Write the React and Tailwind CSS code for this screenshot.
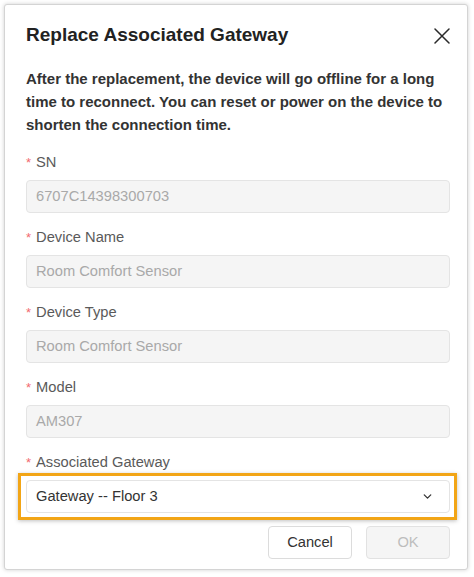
import { ChevronDown } from "lucide-react";

const fields = [
  { label: "SN", value: "6707C14398300703" },
  { label: "Device Name", value: "Room Comfort Sensor" },
  { label: "Device Type", value: "Room Comfort Sensor" },
  { label: "Model", value: "AM307" },
];

function Label({ children }) {
  return (
    <div className="flex items-center h-[22px] text-[14.7px] text-[#5a5a5a]">
      <span className="text-[#f26a6f] text-[13px] mr-[5px] mt-[2px]">*</span>
      {children}
    </div>
  );
}

export default function App() {
  return (
    <div
      className="min-h-screen bg-white pt-[4px] pl-[4px]"
      style={{ fontFamily: '"Liberation Sans", Arial, sans-serif' }}
    >
      <div className="w-[464px] h-[566px] bg-white border border-[#d4d4d4] rounded-[3px] shadow-[0_0_4px_rgba(0,0,0,0.18)] pt-[18px] pl-[21px] pr-[17px] pb-[10px] flex flex-col">
        {/* header */}
        <div className="flex items-center justify-between h-[24px]">
          <h1 className="text-[19px] font-bold leading-[24px] text-[#222]">
            Replace Associated Gateway
          </h1>
          <svg width="16" height="16" viewBox="0 0 16 16" className="mr-[0px] mt-[1px]">
            <path d="M1 1 L15 15 M15 1 L1 15" stroke="#2a2a2a" strokeWidth="1.5" strokeLinecap="round" fill="none" />
          </svg>
        </div>

        <p className="mt-[19.5px] text-[15px] font-bold leading-[23px] text-[#333]">
          After the replacement, the device will go offline for a long time to
          reconnect. You can reset or power on the device to shorten the
          connection time.
        </p>

        <div className="mt-[15.5px] flex flex-col">
          {fields.map((f) => (
            <div key={f.label} className="mb-[13px]">
              <Label>{f.label}</Label>
              <div className="mt-[7px] h-[33px] rounded-[4px] border border-[#e4e4e4] bg-[#f5f5f5] flex items-center px-[9px] text-[14.7px] text-[#a9a9a9]">
                {f.value}
              </div>
            </div>
          ))}

          <div>
            <Label>Associated Gateway</Label>
            <div className="relative mt-[7px]">
              <div className="absolute -left-[8px] -right-[7px] -top-[7px] -bottom-[7px] border-[3px] border-[#f2a516] shadow-[0_1px_4px_rgba(0,0,0,0.25)] pointer-events-none" />
              <div className="h-[33px] rounded-[4px] border border-[#e4e4e4] bg-white flex items-center justify-between px-[9px] text-[14.7px] text-[#333]">
                <span>Gateway -- Floor 3</span>
                <ChevronDown size={13} strokeWidth={2.4} className="text-[#333] mr-[6px]" />
              </div>
            </div>
          </div>
        </div>

        <div className="mt-[13px] flex justify-end gap-[14px]">
          <button className="w-[84px] h-[33px] rounded-[4px] border border-[#dcdcdc] bg-white text-[14.7px] text-[#333]">
            Cancel
          </button>
          <button className="w-[84px] h-[33px] rounded-[4px] border border-[#e2e2e2] bg-[#f5f5f5] text-[14.7px] text-[#bdbdbd]">
            OK
          </button>
        </div>
      </div>
    </div>
  );
}
